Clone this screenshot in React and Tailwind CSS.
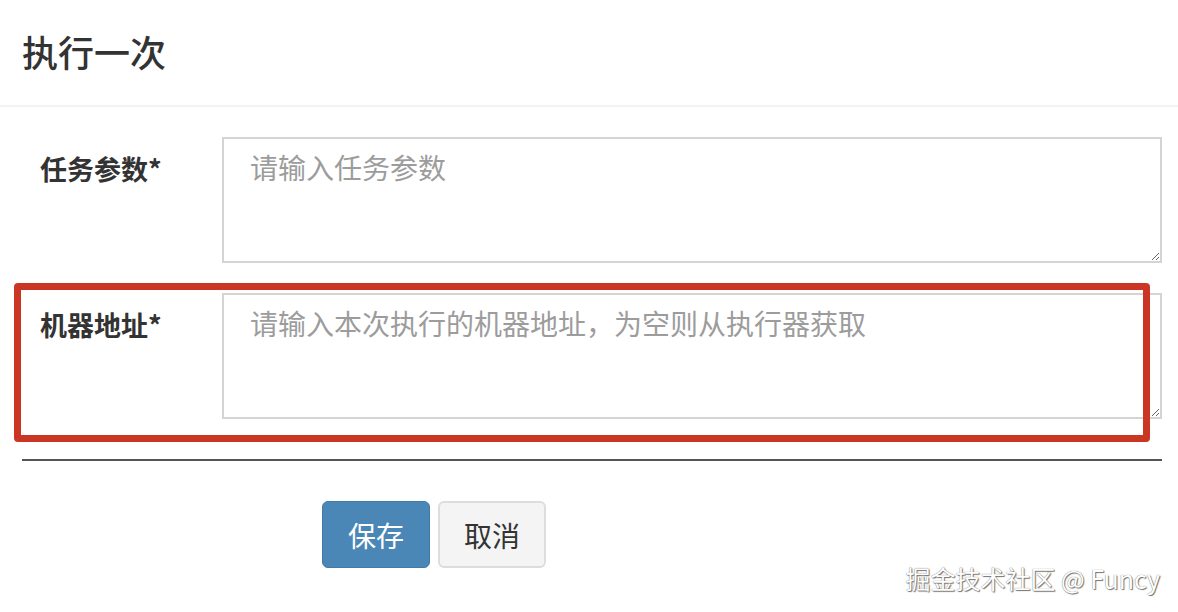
import React, { useState } from "react";

const font = "font-['Noto_Sans_CJK_SC','Noto_Sans',sans-serif]";

function FieldRow({ label, placeholder, value, onChange }) {
  return (
    <div className="flex items-start">
      <label className="w-[222px] shrink-0 pl-[40px] pt-[15px] text-[27px] leading-[34px] font-bold text-[#333]">
        {label}
      </label>
      <textarea
        value={value}
        onChange={(e) => onChange(e.target.value)}
        placeholder={placeholder}
        className="block w-[940px] h-[126px] border-2 border-[#d4d4d4] bg-white px-[26px] pt-[8px] text-[28px] leading-[40px] text-[#555] placeholder:text-[#9c9c9c] outline-none"
      />
    </div>
  );
}

export default function App() {
  const [params, setParams] = useState("");
  const [address, setAddress] = useState("");

  return (
    <div className={`relative w-[1178px] h-[612px] bg-white overflow-hidden ${font}`}>
      <div className="h-[107px] border-b-2 border-[#f3f3f3] pl-[22px] pt-[26px]">
        <h3 className="text-[36px] leading-[50px] font-medium text-[#333]">执行一次</h3>
      </div>

      <div className="pt-[30px] flex flex-col gap-[30px]">
        <FieldRow
          label="任务参数*"
          placeholder="请输入任务参数"
          value={params}
          onChange={setParams}
        />
        <FieldRow
          label="机器地址*"
          placeholder="请输入本次执行的机器地址，为空则从执行器获取"
          value={address}
          onChange={setAddress}
        />
      </div>

      <div className="mx-[22px] w-[1140px] mt-[40px] border-t-2 border-[#555]" />

      <div className="flex gap-[8px] pl-[322px] pt-[40px]">
        <button className="w-[108px] h-[67px] rounded-[6px] bg-[#4a87b7] border border-[#3f7aa8] text-white text-[28px]">
          保存
        </button>
        <button className="w-[108px] h-[67px] rounded-[6px] bg-[#f4f4f4] border-2 border-[#dddddd] text-[#333] text-[28px]">
          取消
        </button>
      </div>

      {/* annotation box drawn over the second row */}
      <div className="absolute left-[14px] top-[283px] w-[1136px] h-[159px] border-[7px] border-[#cb3523] rounded-[4px] pointer-events-none" />

      <div className="absolute right-[18px] top-[562px] text-[25px] leading-[32px] text-white [text-shadow:0_0_1px_#555,1px_1px_1px_#777]">
        掘金技术社区 @ Funcy
      </div>
    </div>
  );
}
